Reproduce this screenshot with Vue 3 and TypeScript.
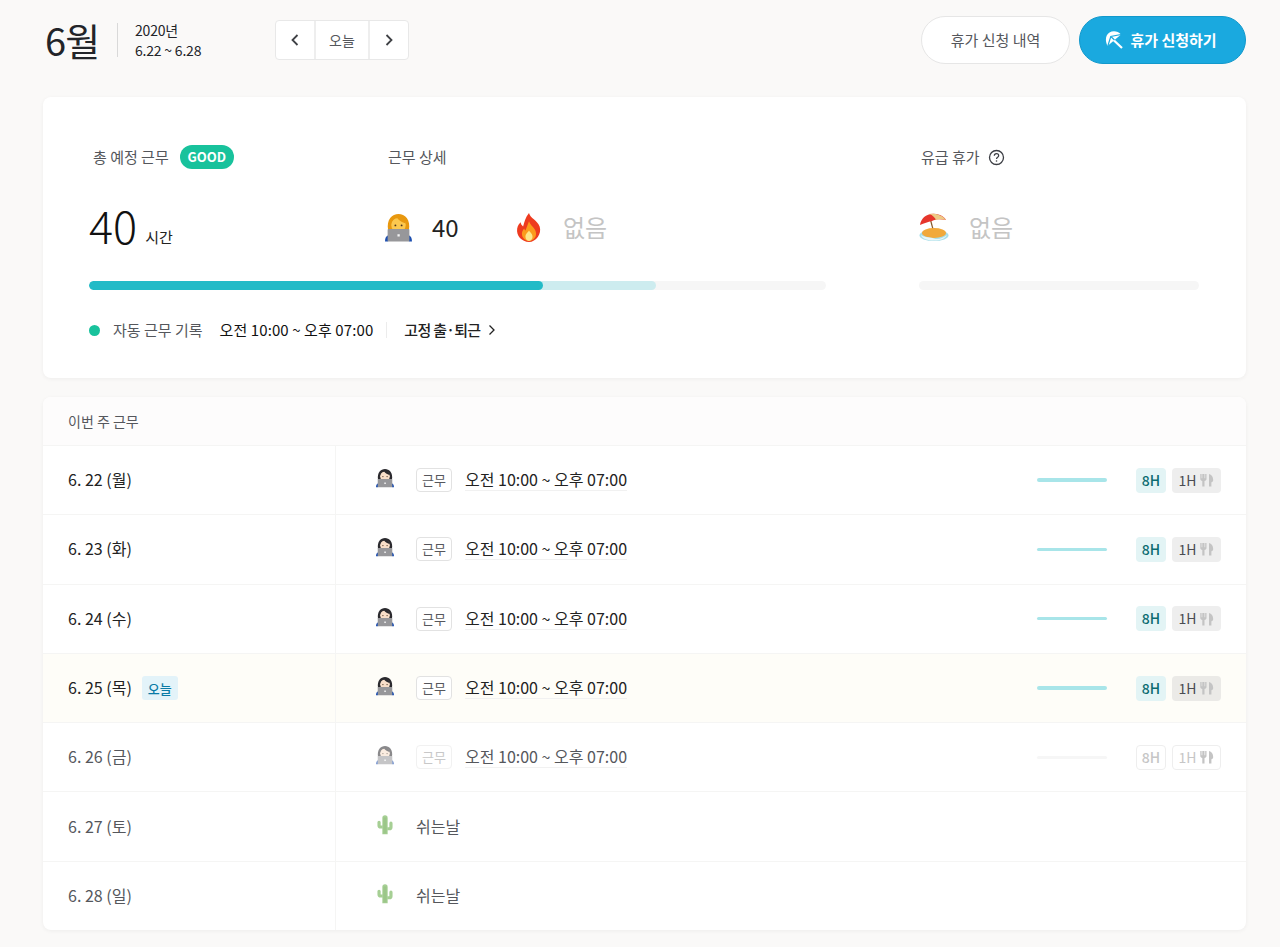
<script setup lang="ts">
interface Row {
  date: string
  kind: 'work' | 'off'
  today?: boolean
  future?: boolean
}

const rows: Row[] = [
  { date: '6. 22 (월)', kind: 'work' },
  { date: '6. 23 (화)', kind: 'work' },
  { date: '6. 24 (수)', kind: 'work' },
  { date: '6. 25 (목)', kind: 'work', today: true },
  { date: '6. 26 (금)', kind: 'work', future: true },
  { date: '6. 27 (토)', kind: 'off' },
  { date: '6. 28 (일)', kind: 'off' },
]
</script>

<template>
  <div class="page">
    <svg width="0" height="0" class="defs" aria-hidden="true">
      <defs>
        <symbol id="worker" viewBox="0 0 26 28">
          <path d="M3 17C1 6 7 1 13 1s12 5 10 16z" fill="currentColor" />
          <ellipse cx="13" cy="11.500" rx="7" ry="7.500" fill="var(--skin)" />
          <path d="M6 10c1-3 3-5 6-5 1 2 5 4 8 5 0-4-3-7-7-7s-8 3-7 7z" fill="currentColor" />
          <circle cx="10" cy="12" r=".9" fill="#4a3320" />
          <circle cx="16" cy="12" r=".9" fill="#4a3320" />
          <path d="M0 27.500c0-3 .8-5 3-6V27.500zM26 27.500c0-3-.8-5-3-6V27.500z" fill="#1d4fb0" />
          <rect x="2.500" y="15.500" width="21" height="12" rx=".8" fill="#97979a" />
          <rect x="12" y="20.500" width="2.200" height="2.200" fill="#f4f4f4" />
        </symbol>
        <symbol id="cactus" viewBox="0 0 18 22">
          <path d="M6 21.500V3a3 3 0 0 1 6 0v18.500z" fill="#a6cf94" />
          <path d="M6.500 15H4a3.500 3.500 0 0 1-3.500-3.500V8a1.800 1.800 0 0 1 3.600 0v3.200c0 .3.200.4.400.4h2zM11.500 17H14a3.500 3.500 0 0 0 3.500-3.500V9a1.800 1.800 0 0 0-3.600 0v4.200c0 .3-.2.4-.4.4h-2z" fill="#a6cf94" />
          <path d="M8 2.500v18M10 2.500v18" stroke="#8dba78" stroke-width=".7" />
        </symbol>
        <symbol id="fork" viewBox="0 0 14 14">
          <path d="M.3 1v5c0 1 .8 1.800 2 2v5.500h2.200V8c1.200-.2 2-1 2-2V1H5.200v4.200h-.7V1H2.300v4.200h-.7V1zM9 13.500V1c2.500.5 4.200 2.800 4.200 6 0 1.300-.6 2-1.800 2.300v4.200z" fill="currentColor" />
        </symbol>
      </defs>
    </svg>

    <header class="top">
      <div class="top-left">
        <h1 class="month">6월</h1>
        <div class="range">
          <div>2020년</div>
          <div>6.22 ~ 6.28</div>
        </div>
        <div class="pager">
          <button class="pg arrow" type="button" aria-label="이전">
            <svg width="10" height="14" viewBox="0 0 10 14"><path d="M7.500 2 2.500 7l5 5" fill="none" stroke="#3f4145" stroke-width="1.800" /></svg>
          </button>
          <button class="pg today-btn" type="button">오늘</button>
          <button class="pg arrow" type="button" aria-label="다음">
            <svg width="10" height="14" viewBox="0 0 10 14"><path d="m2.500 2 5 5-5 5" fill="none" stroke="#3f4145" stroke-width="1.800" /></svg>
          </button>
        </div>
      </div>
      <div class="top-right">
        <button class="pill ghost" type="button">휴가 신청 내역</button>
        <button class="pill primary" type="button">
          <svg width="19" height="19" viewBox="0 0 19 19">
            <path d="M2.500 16C-.5 9.500 1 4.500 4.500 2.500 8 .3 13 1 16 4.500z" fill="#fff" />
            <path d="m8.500 10 8.500 8" stroke="#fff" stroke-width="2.200" />
            <path d="M2.800 16 5.800 6.500 16 4.500M5.800 6.500 9.500 10" fill="none" stroke="#1aa9df" stroke-width="1.200" />
          </svg>
          휴가 신청하기
        </button>
      </div>
    </header>

    <section class="card summary">
      <div class="sum-main">
        <div class="sum-cols">
          <div class="col-total">
            <div class="label first">총 예정 근무 <span class="good">GOOD</span></div>
            <div class="value total"><b class="big">40</b><span class="unit">시간</span></div>
          </div>
          <div class="col-detail">
            <div class="label second">근무 상세</div>
            <div class="value detail">
              <svg class="emoji worker-y" width="27" height="29"><use href="#worker" /></svg>
              <span class="num">40</span>
              <svg class="emoji flame" width="26" height="30" viewBox="2 0 22 29" preserveAspectRatio="none">
                <path d="M13 1c1 5 7 7 9 13 2 7-3 15-9 15S2 23 3 16c.5-3 2-5 3-6 0 2 1 3 2 4 1-4 2-9 5-13z" fill="#ee3b1f" />
                <path d="M13 9c1 4 6 7 6 12 0 4-3 7-6 7s-6-3-6-7c0-2 1-4 2-5 0 1 1 2 1 2 1-3 2-6 3-9z" fill="#fb9a1c" />
                <path d="M13 18c1 2 3 3 3 6 0 2-1 4-3 4s-3-2-3-4c0-3 2-4 3-6z" fill="#fde58a" />
              </svg>
              <span class="none">없음</span>
            </div>
          </div>
        </div>
        <div class="bar">
          <span class="bar-light"></span>
          <span class="bar-fill"></span>
        </div>
        <div class="auto">
          <span class="dot"></span>
          <span class="auto-label">자동 근무 기록</span>
          <span class="auto-time">오전 10:00 ~ 오후 07:00</span>
          <span class="vline"></span>
          <span class="auto-link">고정 출·퇴근</span>
          <svg width="8" height="12" viewBox="0 0 8 12"><path d="m1.500 1.500 4.500 4.500-4.500 4.500" fill="none" stroke="#222" stroke-width="1.300" /></svg>
        </div>
      </div>
      <div class="sum-side">
        <div class="label third">유급 휴가
          <svg width="17" height="17" viewBox="0 0 17 17">
            <circle cx="8.500" cy="8.500" r="7" fill="none" stroke="#3c3e44" stroke-width="1.300" />
            <path d="M6.300 6.800c0-1.300 1-2.100 2.200-2.100s2.200.8 2.200 2c0 1.600-2.200 1.600-2.200 3.300" fill="none" stroke="#3c3e44" stroke-width="1.200" />
            <circle cx="8.500" cy="12" r=".8" fill="#3c3e44" />
          </svg>
        </div>
        <div class="value detail">
          <svg class="emoji beach" width="30" height="30" viewBox="0 0 30 30">
            <path d="M11 6l4 15" stroke="#8a5a2b" stroke-width="1.200" />
            <path d="M1 13C2 5 10-1 21 3c3 1 5 3 6 5-6-1-10-1-14 1-4 1-8 2-12 4z" fill="#e6352b" />
            <path d="M10 2c4-1 13 0 17 6-4-1-7-1-10 0-1-2-3-5-7-6z" fill="#edca85" />
            <ellipse cx="15" cy="23.500" rx="14.500" ry="5.500" fill="#a7deea" />
            <ellipse cx="15" cy="21" rx="12" ry="5" fill="#f1a93a" />
            <path d="M2 23c4 3 9 2 13 3.500S25 26 28 23c-2 4-7 5.500-13 5.500S3 27 2 23z" fill="#e9f6f7" />
          </svg>
          <span class="none">없음</span>
        </div>
        <div class="bar"></div>
      </div>
    </section>

    <section class="card list">
      <div class="list-head">이번 주 근무</div>
      <div
        v-for="r in rows"
        :key="r.date"
        class="row"
        :class="{ today: r.today, future: r.future, off: r.kind === 'off' }"
      >
        <div class="date">
          <span>{{ r.date }}</span>
          <span v-if="r.today" class="today-tag">오늘</span>
        </div>
        <div class="body">
          <template v-if="r.kind === 'work'">
            <svg class="mini" width="18" height="20"><use href="#worker" /></svg>
            <span class="tag">근무</span>
            <span class="time">오전 10:00 ~ 오후 07:00</span>
            <span class="line"></span>
            <span class="h8">8H</span>
            <span class="h1">1H<svg width="14" height="14"><use href="#fork" /></svg></span>
          </template>
          <template v-else>
            <svg class="mini" width="16" height="20"><use href="#cactus" /></svg>
            <span class="rest">쉬는날</span>
          </template>
        </div>
      </div>
    </section>
  </div>
</template>

<style>
html,
body {
  margin: 0;
  background: #faf9f8;
}
</style>

<style scoped>
.page {
  box-sizing: border-box;
  width: 1280px;
  height: 947px;
  overflow: hidden;
  padding: 0 34px 0 43px;
  background: #faf9f8;
  font-family: "Noto Sans CJK KR", "Noto Sans", sans-serif;
  color: #222429;
}
.defs {
  position: absolute;
}
.top {
  display: flex;
  align-items: center;
  justify-content: space-between;
  height: 80px;
  margin-bottom: 17px;
}
.top-left {
  display: flex;
  align-items: center;
}
.month {
  margin: 0 0 0 2px;
  width: 72px;
  font-size: 38px;
  line-height: 46px;
  font-weight: 400;
  letter-spacing: -0.8px;
  border-right: 1px solid #d9d9d9;
  height: 34px;
  display: flex;
  align-items: center;
}
.range {
  margin-left: 17px;
  font-size: 14px;
  line-height: 20px;
  letter-spacing: -0.2px;
  width: 140px;
}
.pager {
  display: flex;
  height: 40px;
  box-sizing: border-box;
  border: 1px solid #e8e8e8;
  border-radius: 4px;
  background: #fff;
}
.pg {
  border: 0;
  background: none;
  padding: 0 0 1px;
  font: inherit;
  display: flex;
  align-items: center;
  justify-content: center;
  color: #55575c;
  font-size: 14px;
}
.arrow {
  width: 38px;
}
.today-btn {
  width: 56px;
  border-left: 2px solid #eeeeee;
  border-right: 2px solid #eeeeee;
}
.top-right {
  display: flex;
  gap: 9px;
}
.pill {
  height: 48px;
  border-radius: 24px;
  font: inherit;
  font-size: 15px;
  display: flex;
  align-items: center;
  justify-content: center;
  box-sizing: border-box;
  padding: 0 0 2px;
}
.ghost {
  width: 149px;
  border: 1px solid #e6e6e6;
  background: #fff;
  color: #55575c;
}
.primary {
  width: 167px;
  border: 1px solid #1299cc;
  background: #1aa9df;
  color: #fff;
  font-weight: 700;
  gap: 6px;
  padding-right: 3px;
}
.card {
  background: #fff;
  border-radius: 8px;
  box-shadow: 0 1px 4px rgba(0, 0, 0, 0.05);
}
.summary {
  height: 281px;
  box-sizing: border-box;
  padding: 47px 47px 0 46px;
  display: flex;
  gap: 93px;
}
.sum-main {
  width: 737px;
}
.sum-side {
  width: 280px;
}
.sum-cols {
  display: flex;
  height: 137px;
}
.col-total {
  width: 296px;
}
.label {
  box-sizing: border-box;
  height: 26px;
  padding-bottom: 2px;
  display: flex;
  align-items: center;
  font-size: 15px;
  color: #55575c;
  gap: 11px;
  margin-bottom: 29px;
}
.label svg {
  margin-bottom: -2px;
  margin-left: -3px;
}
.label.first {
  padding-left: 4px;
}
.label.second {
  padding-left: 3px;
}
.label.third {
  padding-left: 2px;
}
.good {
  background: #18c29c;
  color: #fff;
  font-size: 13px;
  font-weight: 700;
  height: 24px;
  width: 54px;
  margin-bottom: -2px;
  padding-bottom: 1px;
  box-sizing: border-box;
  border-radius: 12px;
  display: inline-flex;
  align-items: center;
  justify-content: center;
}
.value {
  display: flex;
  align-items: baseline;
  height: 56px;
}
.total {
  margin-top: -2px;
}
.big {
  font-weight: 300;
  font-size: 45px;
  line-height: 56px;
  color: #111;
}
.unit {
  font-size: 15px;
  margin-left: 8px;
  color: #222;
  position: relative;
  top: -1px;
}
.detail {
  align-items: center;
}
.emoji {
  flex: none;
}
.num {
  font-size: 24px;
  line-height: 32px;
  color: #222;
  margin-left: 20px;
  width: 84px;
}
.flame {
  margin-right: 21px;
}
.beach {
  margin-right: 20px;
}
.none {
  font-size: 24px;
  line-height: 32px;
  color: #c4c4c4;
  padding-bottom: 1px;
}
.worker-y {
  color: #e8980f;
  --skin: #fcc84f;
}
.bar {
  position: relative;
  height: 9px;
  border-radius: 5px;
  background: #f6f6f6;
  overflow: hidden;
}
.sum-side .bar {
  margin-top: 26px;
}
.bar-light,
.bar-fill {
  position: absolute;
  left: 0;
  top: 0;
  bottom: 0;
  border-radius: 5px;
}
.bar-light {
  width: 567px;
  background: #cdecef;
}
.bar-fill {
  width: 454px;
  background: #22bbc7;
}
.auto {
  display: flex;
  align-items: center;
  height: 26px;
  margin-top: 27px;
  font-size: 15px;
}
.auto > span:not(.dot):not(.vline) {
  padding-bottom: 2px;
}
.dot {
  width: 11px;
  height: 11px;
  border-radius: 50%;
  background: #18c29c;
  margin-right: 13px;
}
.auto-label {
  color: #55575c;
  margin-right: 17px;
}
.auto-time {
  color: #111;
  letter-spacing: 0.1px;
}
.vline {
  width: 1px;
  height: 16px;
  background: #ececec;
  margin: 0 17px 0 13px;
}
.auto-link {
  margin-right: 8px;
  color: #222;
  font-weight: 500;
  letter-spacing: -0.7px;
}
.list {
  margin-top: 19px;
  height: 533px;
  overflow: hidden;
}
.list-head {
  height: 48px;
  box-sizing: border-box;
  padding-left: 25px;
  display: flex;
  align-items: center;
  background: #fdfcfc;
  font-size: 14px;
  color: #55575c;
}
.row {
  display: flex;
  height: 69.3px;
  box-sizing: border-box;
  border-top: 1px solid #f5f5f4;
}
.date {
  width: 293px;
  box-sizing: border-box;
  padding-left: 25px;
  display: flex;
  align-items: center;
  gap: 10px;
  font-size: 16px;
  color: #222;
  border-right: 1px solid #f5f5f4;
}
.date > span:first-child {
  margin-top: -2px;
}
.today-tag {
  width: 36px;
  height: 24px;
  border-radius: 3px;
  background: #e3f3f9;
  color: #0a7ba6;
  font-size: 13px;
  font-weight: 500;
  display: flex;
  align-items: center;
  justify-content: center;
}
.body {
  flex: 1;
  display: flex;
  align-items: center;
  padding: 0 25px 0 40px;
}
.mini {
  flex: none;
  margin-top: -4px;
  margin-right: 22px;
  color: #2b2a2e;
  --skin: #f9dfc9;
}
.tag {
  box-sizing: border-box;
  width: 36px;
  height: 24px;
  border: 1px solid #e2e2e2;
  border-radius: 4px;
  padding-bottom: 1px;
  display: flex;
  align-items: center;
  justify-content: center;
  font-size: 13px;
  color: #55575c;
  background: #fff;
  margin-right: 13px;
}
.time {
  font-size: 16px;
  color: #222;
  margin-top: -1px;
  border-bottom: 1px solid #f1f1f1;
  line-height: 22px;
}
.line {
  width: 70px;
  height: 3.500px;
  border-radius: 2px;
  background: #a8e5e9;
  margin-left: auto;
  margin-right: 29px;
}
.h8,
.h1 {
  box-sizing: border-box;
  height: 25px;
  padding-bottom: 1px;
  border-radius: 4px;
  display: flex;
  align-items: center;
  justify-content: center;
  font-size: 14px;
}
.h8 {
  width: 30px;
  background: #e3f4f5;
  color: #0a6c70;
  font-weight: 500;
  margin-right: 6px;
}
.h1 {
  width: 49px;
  background: #eeeeee;
  color: #4a4c52;
  gap: 4px;
}
.h1 svg {
  color: #c4c4c4;
  margin-top: 1px;
}
.today {
  background: #fefdf8;
}
.today .h1 {
  background: #ebeae7;
}
.future .date,
.future .time {
  color: #55575c;
}
.future .mini {
  opacity: 0.55;
}
.future .tag {
  color: #c8c8c8;
  border-color: #f1f1f1;
}
.future .line {
  background: #f6f6f6;
}
.future .h8,
.future .h1 {
  background: #fff;
  border: 1px solid #eeeeee;
  color: #c6c6c6;
}
.off .date {
  color: #55575c;
}
.rest {
  font-size: 16px;
  color: #55575c;
  margin-top: -1px;
}
.off .mini {
  margin-right: 23px;
  margin-left: 1px;
}
</style>
